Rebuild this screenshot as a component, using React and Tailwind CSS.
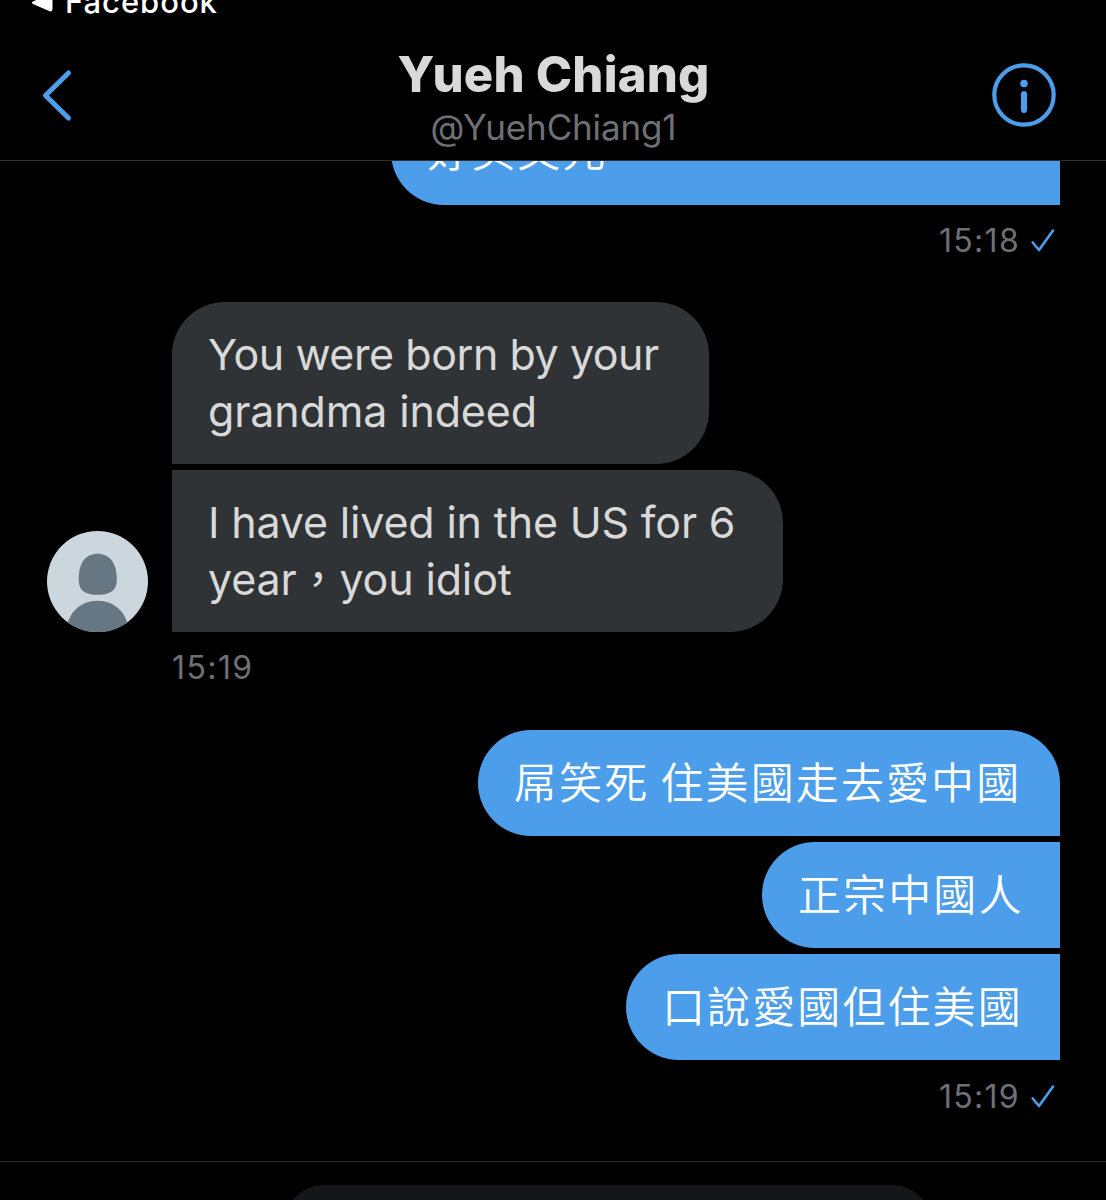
function CheckIcon() {
  return (
    <svg viewBox="0 0 24 24" className="size-6" fill="none" stroke="#4c9eeb" strokeWidth="2.6" strokeLinecap="round" strokeLinejoin="round">
      <path d="M1.7 14.5 L8 22 L22 2.500" />
    </svg>
  )
}

function Avatar() {
  return (
    <svg viewBox="0 0 102 102" className="mr-px size-[101px] shrink-0">
      <clipPath id="avatar">
        <circle cx="51" cy="51" r="51" />
      </clipPath>
      <g clipPath="url(#avatar)">
        <rect width="102" height="102" fill="#ccd6dd" />
        <path d="M51 23C63 23 70.500 32 70.500 49C70.500 60 64 64.500 51 64.500C38 64.500 32 60 32 49C32 32 39 23 51 23Z" fill="#667682" />
        <path d="M19 102C21 82 34 70.500 51 70.500C68 70.500 81 82 83 102Z" fill="#667682" />
      </g>
    </svg>
  )
}

function Status({ time }) {
  return (
    <div className="flex h-[34px] items-center justify-end gap-[11px] pr-[5px] text-[32px] leading-[34px] text-[#6e7075]">
      <span className="pt-[2px] tracking-[1.3px]">{time}</span>
      <CheckIcon />
    </div>
  )
}

function Sent({ className, children }) {
  return (
    <div className={`h-[106px] whitespace-nowrap rounded-l-[53px] bg-[#4c9eeb] pl-[36px] text-[43px] leading-[57px] font-[350] tracking-[2.1px] [word-spacing:-3px] text-white ${className}`}>
      {children}
    </div>
  )
}

function App() {
  return (
    <div className="flex h-[1200px] w-[1106px] flex-col overflow-hidden bg-black font-['Inter','Noto_Sans_CJK_TC',sans-serif]">
      <header className="flex h-[161px] shrink-0 flex-col border-b border-[#2f3133]">
        <div className="flex h-[14px] items-end gap-[12px] pl-[31px] text-white">
          <svg viewBox="0 0 22 18" className="mb-[2px] h-[18px] w-[22px] shrink-0" fill="currentColor">
            <path d="M2 7.500L18 0Q21.500 -1 21.500 2V14Q21.500 18.500 18 17L2 10Q0 8.500 2 7.500Z" />
          </svg>
          <span className="text-[31px] leading-[24px] font-medium tracking-[0.95px]">Facebook</span>
        </div>
        <div className="flex flex-1 justify-between pt-[4px]">
          <div className="w-[115px] pt-[50px] pl-[41px]">
            <svg viewBox="0 0 32 54" className="h-[54px] w-8" fill="none" stroke="#4c9eeb" strokeWidth="5" strokeLinecap="round" strokeLinejoin="round">
              <path d="M27.500 5L4.500 27.500L27.500 50" />
            </svg>
          </div>
          <div className="flex w-[400px] flex-col items-center pt-[27px]">
            <h1 className="text-[49px] leading-[60px] font-extrabold tracking-[0.2px] text-[#d9d9d9]">Yueh Chiang</h1>
            <p className="-mt-px text-[35px] leading-[46px] tracking-[-0.15px] text-[#6e7075]">@YuehChiang1</p>
          </div>
          <div className="w-[114px] pt-[45px]">
            <svg viewBox="0 0 64 64" className="size-16" fill="none" stroke="#4c9eeb">
              <circle cx="32" cy="32" r="29.700" strokeWidth="4.200" />
              <circle cx="32" cy="20.500" r="3.800" fill="#4c9eeb" stroke="none" />
              <path d="M32 31V47" strokeWidth="6" strokeLinecap="round" />
            </svg>
          </div>
        </div>
      </header>

      <main className="flex h-[1000px] shrink-0 flex-col pr-[46px] pl-[47px]">
        <div className="flex h-[44px] flex-col items-end justify-end overflow-hidden">
          <Sent className="w-[669px] shrink-0 pt-[24px]">好英文元</Sent>
        </div>
        <div className="mt-[18px]">
          <Status time="15:18" />
        </div>

        <div className="mt-[45px] flex items-end gap-[23px]">
          <Avatar />
          <div className="flex flex-col gap-[6px] text-[43px] leading-[57px] text-[#d9d9d9]">
            <div className="h-[162px] w-[537px] rounded-t-[53px] rounded-br-[53px] bg-[#2f3336] pt-[24px] pl-[36px]">
              <p className="tracking-[-0.45px]">You were born by your</p>
              <p className="tracking-[-0.15px]">grandma indeed</p>
            </div>
            <div className="h-[162px] w-[611px] rounded-r-[53px] bg-[#2f3336] pt-[24px] pl-[36px]">
              <p className="tracking-[-0.18px]">I have lived in the US for 6</p>
              <p className="tracking-[-0.15px]">year，you idiot</p>
            </div>
          </div>
        </div>
        <p className="mt-[19px] ml-[125px] text-[32px] leading-[34px] tracking-[1.4px] text-[#6e7075]">15:19</p>

        <div className="mt-[45px] flex flex-col items-end gap-[6px]">
          <Sent className="w-[582px] rounded-tr-[53px] pt-[25px]">屌笑死 住美國走去愛中國</Sent>
          <Sent className="w-[298px] pt-[25px]">正宗中國人</Sent>
          <Sent className="w-[434px] pt-[25px]">口說愛國但住美國</Sent>
        </div>
        <div className="mt-[19px]">
          <Status time="15:19" />
        </div>
      </main>

      <footer className="flex h-[39px] shrink-0 items-start border-t border-[#2f3133] pt-[23px] pl-[284px]">
        <div className="h-[80px] w-[648px] shrink-0 rounded-[40px] bg-[#15161a]" />
      </footer>
    </div>
  )
}

export default App
